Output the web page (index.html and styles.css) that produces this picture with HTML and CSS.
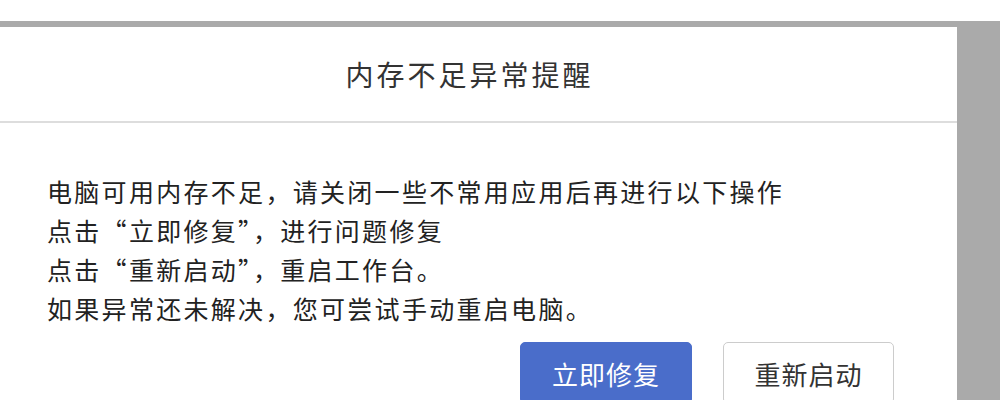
FILE: index.html
```html
<!DOCTYPE html>
<html lang="zh-CN">
<head>
<meta charset="utf-8">
<link rel="stylesheet" href="styles.css">
</head>
<body>
<div class="topbar"></div>
<div class="stage">
  <div class="dialog">
    <div class="header"><span class="title">内存不足异常提醒</span></div>
    <div class="content">
      <p class="line">电脑可用内存不足，请关闭一些不常用应用后再进行以下操作</p>
      <p class="line">点击“立即修复”，进行问题修复</p>
      <p class="line">点击“重新启动”，重启工作台。</p>
      <p class="line">如果异常还未解决，您可尝试手动重启电脑。</p>
    </div>
    <div class="actions">
      <button class="btn btn-primary">立即修复</button>
      <button class="btn btn-default">重新启动</button>
    </div>
  </div>
  <div class="side"></div>
</div>
</body>
</html>
```
FILE: styles.css
```css
html, body {
  margin: 0;
  padding: 0;
  height: 400px;
  overflow: hidden;
  background: #ffffff;
  font-family: "Noto Sans CJK SC", "Microsoft YaHei", sans-serif;
  color: #333333;
}
.topbar {
  height: 21px;
  background: #ffffff;
}
.stage {
  display: flex;
  background: #aaaaaa;
  padding-top: 6px;
  height: 373px;
  overflow: hidden;
}
.dialog {
  width: 957px;
  background: #ffffff;
  display: flex;
  flex-direction: column;
}
.dialog > * {
  flex: none;
}
.side {
  flex: 1;
}
.header {
  height: 94px;
  border-bottom: 2px solid #dddddd;
  display: flex;
  align-items: center;
  justify-content: center;
  padding-right: 18px;
}
.title {
  font-size: 28px;
  letter-spacing: 3px;
  color: #333333;
}
.content {
  padding: 49px 0 0 47px;
}
.line {
  margin: 0;
  font-size: 25px;
  line-height: 39px;
  letter-spacing: 2.3px;
  color: #222222;
}
.actions {
  display: flex;
  justify-content: flex-end;
  gap: 31px;
  padding: 14px 63px 0 0;
}
.btn {
  height: 62px;
  width: 172px;
  border-radius: 5px;
  font-family: "Noto Sans CJK SC", sans-serif;
  font-size: 26px;
  letter-spacing: 1px;
  padding: 0;
  cursor: pointer;
}
.btn-primary {
  background: #4a6dca;
  border: 1px solid #4a6dca;
  color: #ffffff;
}
.btn-default {
  width: 171px;
  background: #ffffff;
  border: 1px solid #cccccc;
  color: #333333;
}
```
